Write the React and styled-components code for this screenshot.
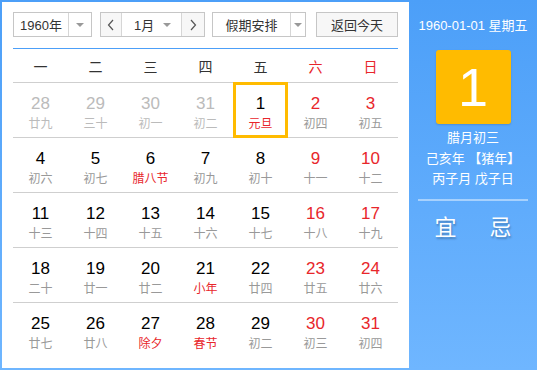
import React from 'react'
import styled, { createGlobalStyle } from 'styled-components'

const GlobalStyle = createGlobalStyle`
  body {
    margin: 0;
    font-family: "Liberation Sans", "Noto Sans CJK SC", sans-serif;
  }
`

const weekNames = ['一', '二', '三', '四', '五', '六', '日']

// [day, lunar, prevMonth, festival]
const weeks = [
  [[28, '廿九', 1], [29, '三十', 1], [30, '初一', 1], [31, '初二', 1], [1, '元旦', 0, 1], [2, '初四'], [3, '初五']],
  [[4, '初六'], [5, '初七'], [6, '腊八节', 0, 1], [7, '初九'], [8, '初十'], [9, '十一'], [10, '十二']],
  [[11, '十三'], [12, '十四'], [13, '十五'], [14, '十六'], [15, '十七'], [16, '十八'], [17, '十九']],
  [[18, '二十'], [19, '廿一'], [20, '廿二'], [21, '小年', 0, 1], [22, '廿四'], [23, '廿五'], [24, '廿六']],
  [[25, '廿七'], [26, '廿八'], [27, '除夕', 0, 1], [28, '春节', 0, 1], [29, '初二'], [30, '初三'], [31, '初四']],
]

const Chevron = ({ dir }) => (
  <svg width="8" height="12" viewBox="0 0 8 12">
    <polyline
      points={dir === 'left' ? '6,1 1.5,6 6,11' : '2,1 6.5,6 2,11'}
      fill="none"
      stroke="#555"
      strokeWidth="1.2"
    />
  </svg>
)

const App = () => {
  return (
    <>
      <GlobalStyle />
      <Wrapper>
        <Main>
          <Toolbar>
            <SelectBox $w={79} $split={55}>
              <SelectText>1960年</SelectText>
              <ArrowCell><Caret /></ArrowCell>
            </SelectBox>
            <MonthBox>
              <NavBtn><Chevron dir="left" /></NavBtn>
              <MonthMid>
                <span>1月</span>
                <Caret />
              </MonthMid>
              <NavBtn><Chevron dir="right" /></NavBtn>
            </MonthBox>
            <SelectBox $w={94} $split={78}>
              <SelectText>假期安排</SelectText>
              <ArrowCell><Caret /></ArrowCell>
            </SelectBox>
            <TodayBtn>返回今天</TodayBtn>
          </Toolbar>

          <Table>
            <HeadRow>
              {weekNames.map((n, i) => (
                <HeadCell key={n} $weekend={i > 4}>{n}</HeadCell>
              ))}
            </HeadRow>
            {weeks.map((week, r) => (
              <Row key={r} $last={r === weeks.length - 1}>
                {week.map(([day, lunar, prev, fest], c) => (
                  <Cell key={c} $selected={r === 0 && c === 4}>
                    <DayNum $prev={prev} $weekend={c > 4}>{day}</DayNum>
                    <Lunar $prev={prev} $fest={fest}>{lunar}</Lunar>
                  </Cell>
                ))}
              </Row>
            ))}
          </Table>
        </Main>

        <Side>
          <SideDate>1960-01-01 星期五</SideDate>
          <BigDay>1</BigDay>
          <InfoLines>
            <div>腊月初三</div>
            <div>己亥年 【猪年】</div>
            <div>丙子月 戊子日</div>
          </InfoLines>
          <Divider />
          <YiJi>
            <span>宜</span>
            <span>忌</span>
          </YiJi>
        </Side>
      </Wrapper>
    </>
  )
}

const Wrapper = styled.div`
  width: 537px;
  height: 370px;
  box-sizing: border-box;
  padding: 2px 2px 2px 2px;
  display: flex;
  background: linear-gradient(to bottom, #4c9ff8, #6fb6ff);
`

const Main = styled.div`
  width: 407px;
  background: #fff;
  box-sizing: border-box;
  padding: 10px 11px 0 11px;
`

const Toolbar = styled.div`
  display: flex;
  height: 25px;
  margin-bottom: 11px;
  font-size: 13px;
  color: #333;
`

const SelectBox = styled.div`
  width: ${p => p.$w}px;
  height: 25px;
  box-sizing: border-box;
  border: 1px solid #c6c6c6;
  display: grid;
  grid-template-columns: ${p => p.$split}px 1fr;
  margin-right: 8px;
  background: #fff;

  &:nth-child(3) {
    margin-right: 10px;
  }
`

const SelectText = styled.div`
  display: flex;
  align-items: center;
  justify-content: center;
  border-right: 1px solid #d6d6d6;
`

const ArrowCell = styled.div`
  display: flex;
  align-items: center;
  justify-content: center;
`

const Caret = styled.i`
  width: 0;
  height: 0;
  border-left: 4px solid transparent;
  border-right: 4px solid transparent;
  border-top: 4px solid #999;
`

const MonthBox = styled.div`
  width: 105px;
  height: 25px;
  box-sizing: border-box;
  border: 1px solid #c6c6c6;
  display: grid;
  grid-template-columns: 21px 1fr 23px;
  margin-right: 7px;
`

const NavBtn = styled.div`
  display: flex;
  align-items: center;
  justify-content: center;
  background: #f7f7f7;
  &:first-child {
    border-right: 1px solid #d6d6d6;
  }
  &:last-child {
    border-left: 1px solid #d6d6d6;
  }
`

const MonthMid = styled.div`
  display: flex;
  align-items: center;
  justify-content: space-between;
  padding: 0 10px 0 12px;
`

const TodayBtn = styled.div`
  width: 82px;
  height: 25px;
  box-sizing: border-box;
  border: 1px solid #c6c6c6;
  background: #f7f7f7;
  display: flex;
  align-items: center;
  justify-content: center;
`

const Table = styled.div`
  width: 385px;
  border-top: 1px solid #4c9ff8;
`

const HeadRow = styled.div`
  display: grid;
  grid-template-columns: repeat(7, 55px);
  height: 33px;
  border-bottom: 1px solid #cfcfcf;
`

const HeadCell = styled.div`
  display: flex;
  align-items: center;
  justify-content: center;
  font-size: 14px;
  color: ${p => (p.$weekend ? '#e8262b' : '#333')};
`

const Row = styled.div`
  display: grid;
  grid-template-columns: repeat(7, 55px);
  height: 54px;
  border-bottom: ${p => (p.$last ? 'none' : '1px solid #cfcfcf')};
`

const Cell = styled.div`
  box-sizing: border-box;
  display: flex;
  flex-direction: column;
  align-items: center;
  padding-top: ${p => (p.$selected ? '9px' : '11px')};
  border: ${p => (p.$selected ? '3px solid #ffbb00' : 'none')};
  margin: ${p => (p.$selected ? '-1px 0 0 0' : '0')};
  height: ${p => (p.$selected ? '56px' : 'auto')};
  width: 55px;
`

const DayNum = styled.div`
  font-size: 17px;
  line-height: 20px;
  color: ${p => (p.$prev ? '#bbb' : p.$weekend ? '#e8262b' : '#000')};
`

const Lunar = styled.div`
  font-size: 12px;
  line-height: 18px;
  margin-top: 1px;
  color: ${p => (p.$prev ? '#bbb' : p.$fest ? '#e8262b' : '#999')};
`

const Side = styled.div`
  flex: 1;
  display: flex;
  flex-direction: column;
  align-items: center;
  color: #fff;
`

const SideDate = styled.div`
  font-size: 13px;
  line-height: 18px;
  margin-top: 15px;
  margin-left: 2px;
`

const BigDay = styled.div`
  width: 75px;
  height: 74px;
  margin-top: 15px;
  background: #ffbb00;
  border-radius: 3px;
  box-shadow: 0 1px 2px rgba(0, 0, 0, 0.15);
  display: flex;
  align-items: center;
  justify-content: center;
  font-size: 54px;
  font-weight: 300;
  margin-left: 2px;
`

const InfoLines = styled.div`
  margin-top: 4px;
  font-size: 13px;
  line-height: 20.5px;
  text-align: center;
  margin-left: 2px;
`

const Divider = styled.div`
  width: 110px;
  height: 2px;
  margin-top: 9px;
  background: rgba(255, 255, 255, 0.45);
  margin-left: 2px;
`

const YiJi = styled.div`
  display: flex;
  gap: 33px;
  margin-top: 13px;
  font-size: 22px;
  line-height: 28px;
  text-shadow: 1px 2px 2px rgba(0, 0, 0, 0.25);
  margin-left: 2px;
`

export default App
